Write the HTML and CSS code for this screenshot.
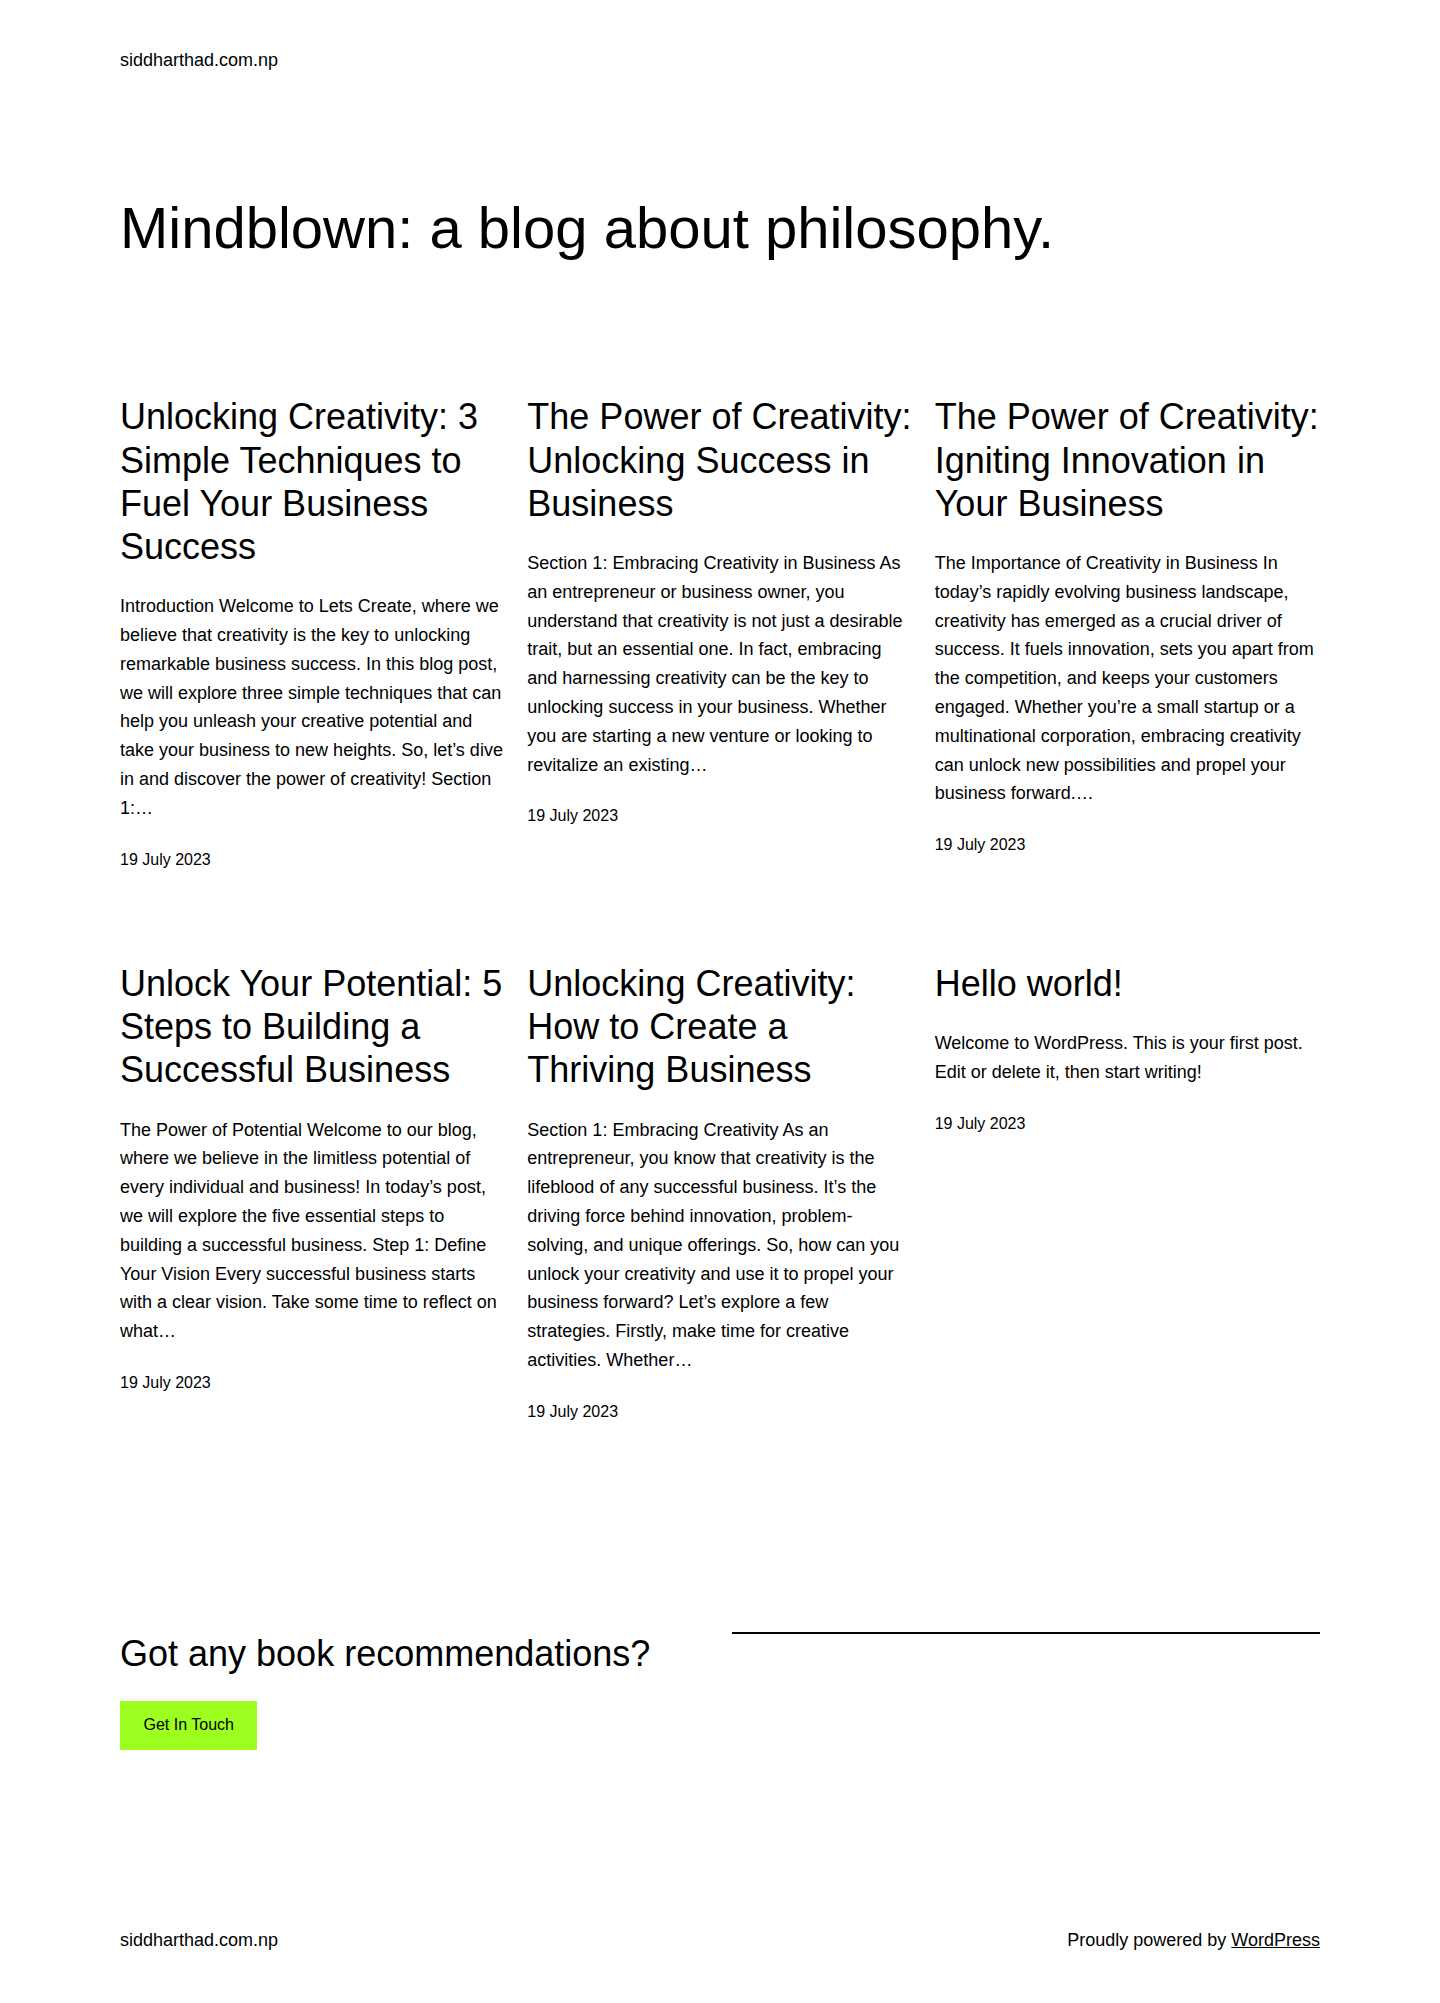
FILE: index.html
```html
<!DOCTYPE html>
<html lang="en">
<head>
<meta charset="utf-8">
<title>siddharthad.com.np</title>
<link rel="stylesheet" href="styles.css">
</head>
<body>
<div class="page">
  <header class="site-header">
    <a class="site-title" href="#">siddharthad.com.np</a>
  </header>

  <main class="site-main">
    <h1 class="page-heading">Mindblown: a blog about philosophy.</h1>

    <ul class="post-grid">
      <li class="post">
        <h2 class="post-title"><a href="#">Unlocking Creativity: 3 Simple Techniques to Fuel Your Business Success</a></h2>
        <p class="post-excerpt">Introduction Welcome to Lets Create, where we believe that creativity is the key to unlocking remarkable business success. In this blog post, we will explore three simple techniques that can help you unleash your creative potential and take your business to new heights. So, let’s dive in and discover the power of creativity! Section 1:…</p>
        <div class="post-date">19 July 2023</div>
      </li>
      <li class="post">
        <h2 class="post-title"><a href="#">The Power of Creativity: Unlocking Success in Business</a></h2>
        <p class="post-excerpt">Section 1: Embracing Creativity in Business As an entrepreneur or business owner, you understand that creativity is not just a desirable trait, but an essential one. In fact, embracing and harnessing creativity can be the key to unlocking success in your business. Whether you are starting a new venture or looking to revitalize an existing…</p>
        <div class="post-date">19 July 2023</div>
      </li>
      <li class="post">
        <h2 class="post-title"><a href="#">The Power of Creativity: Igniting Innovation in Your Business</a></h2>
        <p class="post-excerpt">The Importance of Creativity in Business In today’s rapidly evolving business landscape, creativity has emerged as a crucial driver of success. It fuels innovation, sets you apart from the competition, and keeps your customers engaged. Whether you’re a small startup or a multinational corporation, embracing creativity can unlock new possibilities and propel your business forward.…</p>
        <div class="post-date">19 July 2023</div>
      </li>
      <li class="post">
        <h2 class="post-title"><a href="#">Unlock Your Potential: 5 Steps to Building a Successful Business</a></h2>
        <p class="post-excerpt">The Power of Potential Welcome to our blog, where we believe in the limitless potential of every individual and business! In today’s post, we will explore the five essential steps to building a successful business. Step 1: Define Your Vision Every successful business starts with a clear vision. Take some time to reflect on what…</p>
        <div class="post-date">19 July 2023</div>
      </li>
      <li class="post">
        <h2 class="post-title"><a href="#">Unlocking Creativity: How to Create a Thriving Business</a></h2>
        <p class="post-excerpt">Section 1: Embracing Creativity As an entrepreneur, you know that creativity is the lifeblood of any successful business. It’s the driving force behind innovation, problem-solving, and unique offerings. So, how can you unlock your creativity and use it to propel your business forward? Let’s explore a few strategies. Firstly, make time for creative activities. Whether…</p>
        <div class="post-date">19 July 2023</div>
      </li>
      <li class="post">
        <h2 class="post-title"><a href="#">Hello world!</a></h2>
        <p class="post-excerpt">Welcome to WordPress. This is your first post. Edit or delete it, then start writing!</p>
        <div class="post-date">19 July 2023</div>
      </li>
    </ul>

    <section class="cta">
      <div class="cta-left">
        <h2 class="cta-heading">Got any book recommendations?</h2>
        <a class="cta-button" href="#">Get In Touch</a>
      </div>
      <div class="cta-right">
        <hr class="cta-separator">
      </div>
    </section>
  </main>

  <footer class="site-footer">
    <a class="footer-title" href="#">siddharthad.com.np</a>
    <p class="footer-credit">Proudly powered by <a href="#">WordPress</a></p>
  </footer>
</div>
</body>
</html>
```

FILE: styles.css
```css
* {
  box-sizing: border-box;
}

html, body {
  margin: 0;
  padding: 0;
  background: #ffffff;
}

body {
  font-family: "Liberation Sans", Arial, sans-serif;
  font-size: 18px;
  line-height: 1.6;
  color: #000000;
}

a {
  color: inherit;
  text-decoration: none;
}

.page {
  width: 1200px;
  margin: 0 auto;
}

.site-header {
  padding-top: 46px;
}

.site-title {
  font-size: 18px;
  line-height: 28.8px;
  display: block;
}

.page-heading {
  margin: 118px 0 0;
  font-size: 58px;
  font-weight: 400;
  line-height: 1.2;
  letter-spacing: 0;
}

.post-grid {
  list-style: none;
  margin: 133px 0 0;
  padding: 0;
  display: grid;
  grid-template-columns: repeat(3, minmax(0, 1fr));
  column-gap: 22px;
  row-gap: 90px;
}

.post {
  display: flex;
  flex-direction: column;
  gap: 0;
}

.post-title {
  margin: 0;
  font-size: 36px;
  font-weight: 400;
  line-height: 1.2;
}

.post-excerpt {
  margin: 24px 0 0;
  font-size: 18px;
  line-height: 28.8px;
}

.post-date {
  margin-top: 24px;
  font-size: 16px;
  line-height: 25.6px;
}

.cta {
  margin-top: 208px;
  display: grid;
  grid-template-columns: 1fr 1fr;
  column-gap: 24px;
  align-items: start;
}

.cta-heading {
  margin: 0;
  font-size: 36px;
  font-weight: 400;
  line-height: 1.2;
}

.cta-button {
  display: inline-block;
  margin-top: 25px;
  background: #9dff20;
  color: #000000;
  font-size: 16px;
  line-height: 24px;
  padding: 12.5px 23.5px;
}

.cta-separator {
  margin: 0;
  border: 0;
  border-top: 2px solid #000000;
  height: 0;
}

.site-footer {
  margin-top: 176px;
  padding-bottom: 46px;
  display: flex;
  justify-content: space-between;
  align-items: baseline;
}

.footer-title {
  font-size: 18px;
  line-height: 28.8px;
}

.footer-credit {
  margin: 0;
  font-size: 18px;
  line-height: 28.8px;
}

.footer-credit a {
  text-decoration: underline;
}
```
